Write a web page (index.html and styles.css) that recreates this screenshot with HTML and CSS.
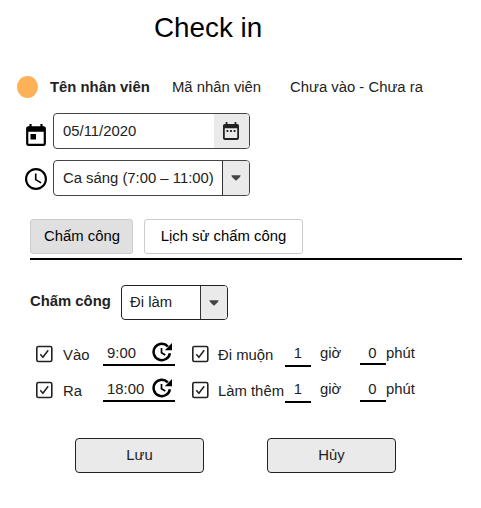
FILE: index.html
```html
<!DOCTYPE html>
<html lang="vi">
<head>
<meta charset="utf-8">
<title>Check in</title>
<link rel="stylesheet" href="styles.css">
</head>
<body>
<svg width="0" height="0" class="defs" aria-hidden="true">
  <symbol id="check" viewBox="0 0 18 18">
    <rect x="1.8" y="1.5" width="15" height="15" rx="1.6" fill="#fff" stroke="#222" stroke-width="1.6"/>
    <path d="M5.300 9.300l2.600 3L13.200 5.200" fill="none" stroke="#222" stroke-width="1.5"/>
  </symbol>
  <symbol id="update" viewBox="0 0 20 20">
    <path d="M15.800 4.300A8.200 8.200 0 1 0 17.900 11.200" fill="none" stroke="#000" stroke-width="2.500"/>
    <path d="M20 1v7.200h-7.200z"/>
    <path d="M9.500 6v4.700l3.800 2.300" fill="none" stroke="#000" stroke-width="1.700"/>
  </symbol>
</svg>
<main class="page">
  <h1 class="title">Check in</h1>

  <div class="person">
    <span class="avatar"></span>
    <strong class="name">Tên nhân viên</strong>
    <span class="code">Mã nhân viên</span>
    <span class="status">Chưa vào - Chưa ra</span>
  </div>

  <div class="row date-row">
    <svg class="icon today" viewBox="3 1 18 20"><path d="M19 3h-1V1h-2v2H8V1H6v2H5c-1.11 0-1.99.9-1.99 2L3 19c0 1.1.89 2 2 2h14c1.1 0 2-.9 2-2V5c0-1.1-.9-2-2-2zm0 16H5V8h14v11zM7 10h5v5H7z"/></svg>
    <div class="field wide">
      <span class="value">05/11/2020</span>
      <span class="addon date"><svg viewBox="3 2 18 20" width="16" height="18"><path fill="#222" d="M9 11H7v2h2v-2zm4 0h-2v2h2v-2zm4 0h-2v2h2v-2zm2-7h-1V2h-2v2H8V2H6v2H5c-1.11 0-1.99.9-1.99 2L3 20c0 1.1.89 2 2 2h14c1.1 0 2-.9 2-2V6c0-1.1-.9-2-2-2zm0 16H5V9h14v11z"/></svg></span>
    </div>
  </div>

  <div class="row shift-row">
    <svg class="icon clock" viewBox="2 2 20 20"><path d="M11.99 2C6.47 2 2 6.48 2 12s4.47 10 9.99 10C17.52 22 22 17.52 22 12S17.52 2 11.99 2zM12 20c-4.42 0-8-3.58-8-8s3.58-8 8-8 8 3.58 8 8-3.58 8-8 8zm.5-13H11v6l5.25 3.15.75-1.23-4.5-2.67z"/></svg>
    <div class="field wide">
      <span class="value">Ca sáng (7:00 – 11:00)</span>
      <span class="addon arrow"><svg viewBox="0 0 10 6" width="10" height="6"><path fill="#444" d="M.5.3h9Q9.500 1.500 8.500 2.400L5.600 5.300Q5 5.800 4.400 5.300L1.500 2.400Q.5 1.500.5.3z"/></svg></span>
    </div>
  </div>

  <nav class="tabs">
    <span class="tab active">Chấm công</span>
    <span class="tab history">Lịch sử chấm công</span>
  </nav>

  <div class="row kind-row">
    <strong class="kind-label">Chấm công</strong>
    <div class="field kind">
      <span class="value">Đi làm</span>
      <span class="addon arrow"><svg viewBox="0 0 10 6" width="10" height="6"><path fill="#444" d="M.5.3h9Q9.500 1.500 8.500 2.400L5.600 5.300Q5 5.800 4.400 5.300L1.500 2.400Q.5 1.500.5.3z"/></svg></span>
    </div>
  </div>

  <section class="times">
    <div class="time-row first">
      <svg class="check"><use href="#check"/></svg>
      <span class="label">Vào</span>
      <span class="time"><span>9:00</span><svg class="update"><use href="#update"/></svg></span>
      <svg class="check"><use href="#check"/></svg>
      <span class="label">Đi muộn</span>
      <span class="num hours">1</span>
      <span class="unit">giờ</span>
      <span class="num minutes">0</span>
      <span class="unit">phút</span>
    </div>
    <div class="time-row">
      <svg class="check"><use href="#check"/></svg>
      <span class="label">Ra</span>
      <span class="time"><span>18:00</span><svg class="update"><use href="#update"/></svg></span>
      <svg class="check"><use href="#check"/></svg>
      <span class="label">Làm thêm</span>
      <span class="num hours">1</span>
      <span class="unit">giờ</span>
      <span class="num minutes">0</span>
      <span class="unit">phút</span>
    </div>
  </section>

  <div class="actions">
    <button class="btn">Lưu</button>
    <button class="btn">Hủy</button>
  </div>
</main>
</body>
</html>
```
FILE: styles.css
```css
* { box-sizing: border-box; }
body {
  margin: 0;
  background: #fff;
  color: #222;
  font: 14.85px/18px "Liberation Sans", Arial, sans-serif;
}
.defs { display: block; }
.page { width: 481px; height: 508px; overflow: hidden; white-space: nowrap; }
.title {
  margin: 0;
  padding: 11px 0 0 154px;
  height: 75px;
  font-size: 27.8px;
  line-height: 33px;
  font-weight: 400;
  color: #000;
}
.person {
  display: grid;
  grid-template-columns: 33px 122px 118px 1fr;
  align-items: center;
  height: 23px;
  padding-left: 17px;
}
.avatar { width: 21px; height: 22px; border-radius: 50%; background: #ffb158; }
.row { display: flex; padding-left: 25px; }
.icon { flex: none; }
.date-row { margin-top: 15px; }
.shift-row { margin-top: 11px; }
.today { width: 20px; height: 22px; margin: 11px 7px 0 1px; }
.clock { width: 22px; height: 22px; margin: 8px 6px 0 0; }
.field {
  display: flex;
  height: 36px;
  border: 1px solid #444;
  border-radius: 4px;
  overflow: hidden;
}
.wide { width: 197px; }
.value { flex: 1; padding: 8px 0 0 9px; }
.addon {
  display: flex;
  align-items: center;
  justify-content: center;
  background: #eaeaea;
}
.addon.date { width: 35px; padding-right: 2px; }
.addon.arrow { width: 27px; border-left: 1px solid #333; }
.tabs {
  display: flex;
  gap: 11px;
  width: 432px;
  height: 41px;
  margin: 23px 0 0 30px;
  border-bottom: 2px solid #000;
}
.tab {
  width: 103px;
  height: 35px;
  padding-top: 7px;
  border: 1px solid #ccc;
  border-radius: 3px;
  color: #000;
  text-align: center;
}
.tab.active { padding-left: 1px; background: #e0e0e0; }
.tab.history { width: 159px; }
.kind-row { margin-top: 25px; padding-left: 30px; }
.kind-label { width: 91px; padding-top: 7px; }
.kind { width: 107px; height: 35px; border-color: #222; }
.kind .value { padding: 7px 0 0 8px; }
.times { margin-top: 22px; padding-left: 35px; }
.time-row {
  display: grid;
  grid-template-columns: 28px 40px 88px 27px 67px 35px 40px 26px 1fr;
  height: 36px;
}
.check { width: 18px; height: 18px; margin-top: 3px; }
.label { padding-top: 4px; }
.time {
  display: flex;
  justify-content: space-between;
  width: 72px;
  height: 24px;
  padding: 2px 3px 0 4px;
  border-bottom: 2px solid #000;
}
.update { width: 20px; height: 20px; margin-top: -2px; }
.num {
  width: 26px;
  height: 25px;
  padding-top: 2px;
  border-bottom: 2px solid #000;
  text-align: center;
}
.minutes { height: 24px; padding-right: 1px; }
.first .minutes { height: 23px; }
.unit { padding-top: 2px; }
.actions { display: flex; gap: 63px; margin: 24px 0 0 75px; }
.btn {
  width: 129px;
  height: 35px;
  padding: 0 0 2px;
  border: 1px solid #222;
  border-radius: 4px;
  background: #eaeaea;
  color: #222;
  font: inherit;
}
```
